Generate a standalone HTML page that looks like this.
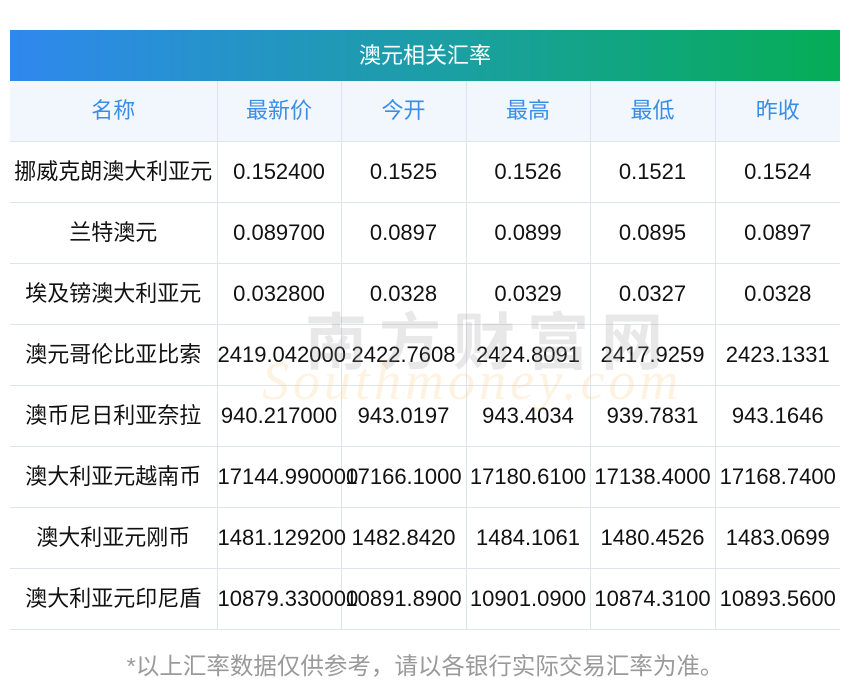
<!DOCTYPE html><html><head><meta charset="utf-8"><style>
body{margin:0;background:#fff;width:850px;height:697px;position:relative;overflow:hidden;font-family:"Liberation Sans","Noto Sans CJK SC",sans-serif}
.title{position:absolute;left:10px;top:30px;width:830px;height:51px;background:linear-gradient(90deg,#2f88ee,#1aa0a0 55%,#05ad55);color:#fff;font-size:22px;line-height:51px;text-align:center}
table{position:absolute;left:10px;top:81px;border-collapse:collapse;table-layout:fixed;width:830px}
td{height:60px;line-height:60px;border:1px solid #dfe3ec;text-align:center;font-size:22px;color:#111;white-space:nowrap;padding:0;overflow:visible}
tr:first-child td{background:#f2f7fe;color:#3a8ee6;border-top:none}
td:first-child{border-left:none}td:last-child{border-right:none}
.wm{position:absolute;left:305px;top:292px;font-size:62px;color:rgba(150,150,150,.22);letter-spacing:12px;font-weight:bold}
.wm2{position:absolute;left:262px;top:350px;font-size:54px;color:rgba(250,200,120,.22);font-style:italic;font-family:"Liberation Serif",serif;letter-spacing:4px}
.foot{position:absolute;top:649px;left:0;width:850px;text-align:center;color:#9a9a9a;font-size:23.5px;line-height:34px}
</style></head><body>
<div class="title">澳元相关汇率</div>
<table>
<colgroup><col style="width:207px"><col style="width:124px"><col style="width:125px"><col style="width:124px"><col style="width:125px"><col style="width:125px"></colgroup>
<tr><td>名称</td><td>最新价</td><td>今开</td><td>最高</td><td>最低</td><td>昨收</td></tr>
<tr><td>挪威克朗澳大利亚元</td><td>0.152400</td><td>0.1525</td><td>0.1526</td><td>0.1521</td><td>0.1524</td></tr>
<tr><td>兰特澳元</td><td>0.089700</td><td>0.0897</td><td>0.0899</td><td>0.0895</td><td>0.0897</td></tr>
<tr><td>埃及镑澳大利亚元</td><td>0.032800</td><td>0.0328</td><td>0.0329</td><td>0.0327</td><td>0.0328</td></tr>
<tr><td>澳元哥伦比亚比索</td><td>2419.042000</td><td>2422.7608</td><td>2424.8091</td><td>2417.9259</td><td>2423.1331</td></tr>
<tr><td>澳币尼日利亚奈拉</td><td>940.217000</td><td>943.0197</td><td>943.4034</td><td>939.7831</td><td>943.1646</td></tr>
<tr><td>澳大利亚元越南币</td><td>17144.990000</td><td>17166.1000</td><td>17180.6100</td><td>17138.4000</td><td>17168.7400</td></tr>
<tr><td>澳大利亚元刚币</td><td>1481.129200</td><td>1482.8420</td><td>1484.1061</td><td>1480.4526</td><td>1483.0699</td></tr>
<tr><td>澳大利亚元印尼盾</td><td>10879.330000</td><td>10891.8900</td><td>10901.0900</td><td>10874.3100</td><td>10893.5600</td></tr>
</table>
<div class="wm">南方财富网</div>
<div class="wm2">Southmoney.com</div>
<div class="foot">*以上汇率数据仅供参考，请以各银行实际交易汇率为准。</div>
</body></html>
